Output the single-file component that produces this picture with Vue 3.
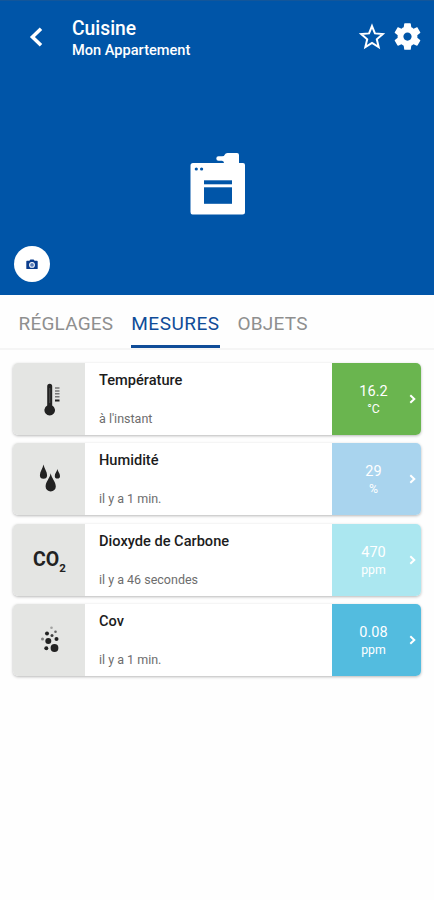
<template>
  <div class="room">
    <header class="hero">
      <div class="topbar">
        <button class="icon-btn back" type="button" aria-label="Retour">
          <svg width="14" height="20" viewBox="0 0 14 20">
            <path d="M12 1.700 3.400 10l8.600 8.300" fill="none" stroke="#fff" stroke-width="3.500" />
          </svg>
        </button>
        <div class="titles">
          <h1>Cuisine</h1>
          <h2>Mon Appartement</h2>
        </div>
        <button class="icon-btn star" type="button" aria-label="Favori">
          <svg width="32" height="32" viewBox="0 0 24 24">
            <path
              fill="none"
              stroke="#fff"
              stroke-width="1.500"
              d="M12 3.800l2.200 5.500 5.900.5-4.500 3.900 1.400 5.800-5-3.100-5 3.100 1.400-5.800-4.500-3.900 5.900-.5z"
            />
          </svg>
        </button>
        <button class="icon-btn gear" type="button" aria-label="Paramètres">
          <svg width="33" height="33" viewBox="0 0 24 24">
            <path
              fill="#fff"
              d="M19.140 12.940c.04-.3.06-.61.06-.94 0-.32-.02-.64-.07-.94l2.030-1.580c.18-.14.23-.41.12-.61l-1.920-3.320c-.12-.22-.37-.29-.59-.22l-2.390.96c-.5-.38-1.030-.7-1.620-.94l-.36-2.540c-.04-.24-.24-.41-.48-.41h-3.840c-.24 0-.43.17-.47.41l-.36 2.540c-.59.24-1.130.57-1.620.94l-2.390-.96c-.22-.08-.47 0-.59.22L2.740 8.870c-.12.21-.08.47.12.61l2.030 1.580c-.05.3-.09.63-.09.94s.02.64.07.94l-2.030 1.580c-.18.14-.23.41-.12.61l1.920 3.320c.12.22.37.29.59.22l2.390-.96c.5.38 1.030.7 1.620.94l.36 2.540c.05.24.24.41.48.41h3.840c.24 0 .44-.17.47-.41l.36-2.540c.59-.24 1.130-.56 1.620-.94l2.390.96c.22.08.47 0 .59-.22l1.920-3.320c.12-.22.07-.47-.12-.61l-2.010-1.580zM12 15c-1.650 0-3-1.350-3-3s1.350-3 3-3 3 1.350 3 3-1.350 3-3 3z"
            />
          </svg>
        </button>
      </div>

      <svg class="room-icon" width="56" height="64" viewBox="0 0 56 64">
        <path
          fill="#fff"
          d="M3 11h31q0-2-2-2.300h-3.500a2.200 2.200 0 0 1 0-4.400H32q2.500 0 2.500-1.300 1-2 3-2h9.500q2 0 2 2v8H53q2 0 2 2v47q0 2.500-2.500 2.500h-50Q.5 62.500.5 60V13.500Q.5 11 3 11z"
        />
        <g fill="#0055a8">
          <circle cx="6.300" cy="17" r="1.600" />
          <circle cx="11.600" cy="17" r="1.600" />
          <rect x="14" y="28.300" width="28" height="4" />
          <rect x="14" y="35.300" width="28" height="16.500" />
        </g>
      </svg>

      <button class="camera" type="button" aria-label="Photo">
        <svg width="12" height="11" viewBox="0 0 12 11">
          <path
            fill="#0b3c8c"
            fill-rule="evenodd"
            d="M1 1.700h2.400L4.400.4h3.200l1 1.300H11q.7 0 .7.700v7q0 .7-.7.700H1q-.7 0-.7-.7v-7q0-.7.7-.7zM6 3a2.900 2.900 0 1 0 0 5.800A2.900 2.900 0 0 0 6 3z"
          />
          <circle cx="6" cy="5.900" r="1.900" fill="#5d7fb8" />
        </svg>
      </button>
    </header>

    <nav class="tabs">
      <a v-for="tab in tabs" :key="tab" :class="['tab', { active: tab === current }]" @click="current = tab">
        {{ tab }}
      </a>
    </nav>

    <main class="list">
      <article v-for="item in measures" :key="item.name" class="card">
        <div class="card-icon">
          <svg v-if="item.icon === 'temp'" width="36" height="36" viewBox="0 0 36 36">
            <path fill="#222" d="M16.200 5.200a2.500 2.500 0 0 1 5 0v19.300a5.300 5.300 0 1 1-5 0z" />
            <path d="M18.700 7v15" stroke="#4a4a4a" stroke-width="1.200" />
            <path d="M24 7h4.500M24 9.900h4.500M24 12.800h4.500M24 15.700h4.500" stroke="#777" stroke-width="1.500" />
            <path d="M24 19.500h4.500" stroke="#222" stroke-width="2" />
          </svg>
          <svg v-else-if="item.icon === 'drops'" width="36" height="36" viewBox="0 0 36 36">
            <path fill="#222" d="M12.500 3.500c.7 3.800 3.600 7 3.600 10.700a3.600 3.600 0 0 1-7.200 0c0-3.700 2.900-6.900 3.600-10.700z" />
            <path fill="#222" d="M26.400 8c.4 2.500 2.600 4.400 2.600 6.900a2.600 2.600 0 0 1-5.200 0c0-2.500 2.200-4.400 2.600-6.900z" />
            <path fill="#222" d="M19.700 12.300c.8 4.800 5.100 8.500 5.100 13.100a5.100 5.100 0 0 1-10.200 0c0-4.600 4.300-8.300 5.100-13.100z" />
          </svg>
          <span v-else-if="item.icon === 'co2'" class="co2">CO<small>2</small></span>
          <svg v-else width="36" height="36" viewBox="0 0 36 36">
            <g fill="#222">
              <circle v-for="(dot, i) in dots" :key="i" :cx="dot[0]" :cy="dot[1]" :r="dot[2]" :opacity="dot[3]" />
            </g>
          </svg>
        </div>
        <div class="card-body">
          <h3>{{ item.name }}</h3>
          <p>{{ item.time }}</p>
        </div>
        <div :class="['card-value', item.color]">
          <div class="reading">
            <strong>{{ item.value }}</strong>
            <span>{{ item.unit }}</span>
          </div>
          <svg class="chevron" width="7" height="10" viewBox="0 0 7 10">
            <path d="M1.300 1.200 5.300 5l-4 3.800" fill="none" stroke="#fff" stroke-width="2" />
          </svg>
        </div>
      </article>
    </main>
  </div>
</template>

<script setup>
import { ref } from 'vue'

const tabs = ['RÉGLAGES', 'MESURES', 'OBJETS']
const current = ref('MESURES')

const measures = [
  { name: 'Température', time: "à l'instant", value: '16.2', unit: '°C', icon: 'temp', color: 'green' },
  { name: 'Humidité', time: 'il y a 1 min.', value: '29', unit: '%', icon: 'drops', color: 'light' },
  { name: 'Dioxyde de Carbone', time: 'il y a 46 secondes', value: '470', unit: 'ppm', icon: 'co2', color: 'aqua' },
  { name: 'Cov', time: 'il y a 1 min.', value: '0.08', unit: 'ppm', icon: 'cov', color: 'blue' }
]

// cx, cy, rayon, opacité
const dots = [
  [20.5, 5.8, 1.3, 0.35],
  [24.5, 9.8, 1.3, 0.65],
  [16, 11.5, 2, 1],
  [21, 13.5, 1.5, 0.85],
  [11.5, 17, 1.5, 0.5],
  [25.5, 17, 2, 1],
  [17.3, 19, 3, 1],
  [15.3, 26.3, 2, 1],
  [23.5, 26, 3.9, 1]
]
</script>

<style>
body {
  background: #fff;
}
</style>

<style scoped>
.room {
  height: 900px;
  background: #fefefe;
  font-family: Roboto, "Liberation Sans", sans-serif;
  overflow: hidden;
}

h1,
h2,
h3,
p {
  margin: 0;
}

button {
  border: none;
  padding: 0;
  background: none;
}

.hero {
  height: 295px;
  box-sizing: border-box;
  background: #0055a8;
  border-top: 1px solid #13569a;
  display: flex;
  flex-direction: column;
  color: #fff;
}

.topbar {
  display: flex;
  align-items: center;
  height: 71px;
  padding: 0 10px 0 29px;
}

.icon-btn {
  display: flex;
}

.titles {
  flex: 1;
  padding-left: 29px;
  padding-top: 4px;
}

.titles h1 {
  font-size: 19.3px;
  line-height: 24px;
  font-weight: 500;
}

.titles h2 {
  font-size: 14.6px;
  line-height: 19px;
  font-weight: 500;
}

.star {
  margin-right: 3px;
}

.room-icon {
  margin: 80px 0 0 190px;
}

.camera {
  width: 36px;
  height: 36px;
  margin: auto 0 13px 14px;
  border-radius: 50%;
  background: #fff;
  display: flex;
  align-items: center;
  justify-content: center;
}

.tabs {
  display: flex;
  gap: 18px;
  height: 55px;
  box-sizing: border-box;
  padding: 0 18.5px;
  border-bottom: 2px solid #f5f5f5;
}

.tab {
  font-size: 19px;
  letter-spacing: 0.2px;
  line-height: 58px;
  height: 50px;
  color: #8f8f8f;
  border-bottom: 3px solid transparent;
}

.tab.active {
  letter-spacing: 0.5px;
  color: #0f4c98;
  border-bottom-color: #0f4c98;
}

.list {
  display: flex;
  flex-direction: column;
  gap: 8.4px;
  padding: 13px 13px 0;
}

.card {
  display: flex;
  height: 72px;
  border-radius: 5px;
  overflow: hidden;
  background: #fff;
  box-shadow: 0 1px 3px rgba(0, 0, 0, 0.28);
}

.card-icon {
  width: 72px;
  background: #e4e5e3;
  display: flex;
  align-items: center;
  justify-content: center;
}

.co2 {
  padding-left: 1px;
  font-size: 19.5px;
  font-weight: 700;
  color: #222;
}

.co2 small {
  font-size: 11.5px;
  position: relative;
  top: 6px;
}

.card-body {
  flex: 1;
  padding: 8px 14px 0;
}

.card-body h3 {
  font-size: 14.6px;
  line-height: 18px;
  font-weight: 500;
  color: #1c1c1c;
}

.card-body p {
  margin-top: 22px;
  font-size: 12.5px;
  line-height: 16px;
  color: #6d6d6d;
}

.card-value {
  width: 89px;
  display: flex;
  align-items: center;
  color: #fff;
}

.reading {
  flex: 1;
  padding: 3px 0 0 6px;
  display: flex;
  flex-direction: column;
  align-items: center;
}

.reading strong {
  font-size: 14.5px;
  line-height: 18px;
  font-weight: 400;
}

.reading span {
  font-size: 12.3px;
  line-height: 17px;
}

.chevron {
  margin-right: 5px;
}

.green {
  background: #6ab54f;
}

.light {
  background: #a9d4ee;
}

.aqua {
  background: #abe7f0;
}

.blue {
  background: #53bcdf;
}
</style>
